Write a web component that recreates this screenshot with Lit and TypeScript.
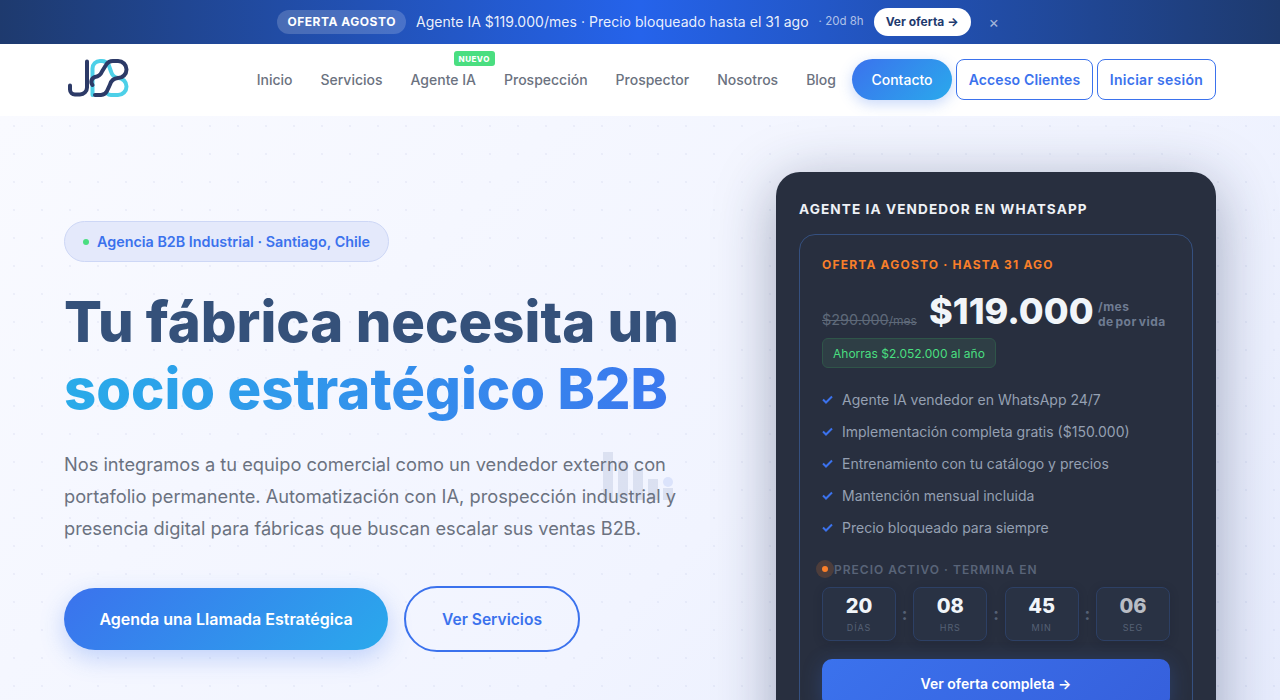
import { LitElement, html, css, svg } from "lit";
import { customElement } from "lit/decorators.js";

const checks = [
  "Agente IA vendedor en WhatsApp 24/7",
  "Implementación completa gratis ($150.000)",
  "Entrenamiento con tu catálogo y precios",
  "Mantención mensual incluida",
  "Precio bloqueado para siempre",
];
const nav = ["Inicio", "Servicios", "Agente IA", "Prospección", "Prospector", "Nosotros", "Blog"];
const counters = [["20", "DÍAS"], ["08", "HRS"], ["45", "MIN"], ["06", "SEG"]];

@customElement("app-root")
export class AppRoot extends LitElement {
  static styles = css`
    :host { display: block; height: 700px; overflow: hidden; font-family: Inter, "Liberation Sans", sans-serif; background: #f5f7ff; }
    * { box-sizing: border-box; }
    .banner { height: 44px; padding-right: 4px; display: flex; align-items: center; justify-content: center; background: linear-gradient(90deg, #1e3a6e 0%, #2563eb 50%, #1e3a6e 100%); color: #fff; }
    .tag { height: 24px; display: flex; align-items: center; padding: 0 10px 2px; border-radius: 12px; background: rgba(255,255,255,.18); font-size: 12px; font-weight: 700; letter-spacing: .53px; margin-right: 10px; }
    .msg { font-size: 14px; letter-spacing: .03px; color: rgba(255,255,255,.92); margin: 0 10px 2px 0; }
    .time { font-size: 11.5px; color: rgba(255,255,255,.65); margin: 0 10px 2px 0; }
    .go { height: 28px; display: flex; align-items: center; padding: 0 12px 2px; border-radius: 14px; background: #fff; color: #1e3a6e; font-size: 12px; font-weight: 700; margin-right: 18px; }
    .x { font-size: 16px; color: rgba(255,255,255,.6); width: 10px; line-height: 1; }
    .nav { height: 72px; padding: 0 64px 1px; background: #fff; display: flex; align-items: center; }
    .logo { width: 68px; height: 46px; display: block; flex: none; }
    .links { display: flex; margin-left: auto; align-items: center; gap: 28px; font-size: 14px; color: #6b7280; margin-right: 16px; }
    .link { position: relative; font-weight: 500; }
    .new { position: absolute; top: -20px; left: 43px; height: 15px; padding: 0 5px; border-radius: 3px; background: #4ade80; color: #fff; font-size: 8px; font-weight: 800; letter-spacing: .5px; display: flex; align-items: center; }
    .btns { display: flex; gap: 4px; align-items: center; }
    .contact { height: 41px; width: 100px; display: flex; align-items: center; justify-content: center; border-radius: 21px; background: linear-gradient(135deg, #3b72ed, #2aa9ec); color: #fff; font-size: 14px; font-weight: 500; box-shadow: 0 4px 14px rgba(59,114,237,.28); }
    .outline { height: 41px; width: 137px; display: flex; align-items: center; justify-content: center; border: 1px solid #3b72ed; border-radius: 8px; color: #3b72ed; font-size: 14px; letter-spacing: .14px; font-weight: 600; background: #fff; }
    .outline.narrow { width: 119px; letter-spacing: .28px; }
    .hero { position: relative; height: 584px; padding: 56px 64px 0; display: flex; justify-content: space-between; background-color: #f4f6fe; background-image: radial-gradient(circle, rgba(59,80,160,.06) 1.2px, transparent 1.4px), linear-gradient(135deg, #f9faff 0%, #f1f4ff 60%, #e7ecfd 100%); background-size: 28px 28px, 100% 100%; background-position: 0 -4px, 0 0; }
    .left { width: 640px; padding-top: 49px; position: relative; }
    .pill { display: inline-flex; align-items: center; height: 41px; padding: 0 18px; border-radius: 21px; background: #e4e9fb; border: 1px solid #cdd7f6; color: #3b72ed; font-size: 14.35px; font-weight: 600; vertical-align: top; }
    .dot { width: 6px; height: 6px; border-radius: 50%; background: #4ade80; margin-right: 8px; }
    h1 { margin: 27px 0 0; font-size: 56.2px; line-height: 67px; font-weight: 800; color: #35517a; white-space: nowrap; }
    .grad { display: block; width: 604px; background: linear-gradient(90deg, #29abe9 0%, #3b78ee 100%); -webkit-background-clip: text; background-clip: text; color: transparent; }
    p { margin: 25px 0 0; width: 620px; font-size: 18.24px; line-height: 32px; color: #6b7280; position: relative; }
    .cta { display: flex; gap: 16px; margin-top: 42px; align-items: center; }
    .primary { height: 62px; width: 324px; display: flex; align-items: center; justify-content: center; border-radius: 31px; background: linear-gradient(135deg, #3b72ed, #2aa9ec); color: #fff; font-size: 16px; font-weight: 600; box-shadow: 0 8px 24px rgba(59,114,237,.28); }
    .secondary { height: 66px; width: 176px; display: flex; align-items: center; justify-content: center; border-radius: 33px; border: 2px solid #3b72ed; color: #3b72ed; font-size: 15.6px; font-weight: 600; }
    .bars { position: absolute; left: 539px; top: 280px; height: 48px; display: flex; align-items: flex-end; gap: 5px; }
    .bars i { display: block; width: 10px; background: rgba(59,80,140,.12); }
    .blob { position: absolute; left: 599px; top: 305px; width: 10px; height: 10px; border-radius: 50%; background: #dbe3fb; }
    .card { width: 440px; height: 700px; flex: none; border-radius: 24px; background: #282f3f; padding: 27px 23px; box-shadow: 0 12px 60px rgba(30,41,80,.38); }
    .title { font-size: 13.6px; font-weight: 700; letter-spacing: 1.09px; color: #eef1f6; line-height: 20px; white-space: nowrap; }
    .inner { margin-top: 15px; border: 1px solid #35507f; border-radius: 16px; height: 600px; padding: 22px 22px; }
    .offer { font-size: 12px; font-weight: 700; letter-spacing: 1.2px; color: #f97f2a; line-height: 16px; }
    .prices { display: flex; align-items: center; margin-top: 12px; height: 50px; }
    .old { font-size: 14.4px; color: #5e6979; text-decoration: line-through; margin-top: 19px; width: 107px; white-space: nowrap; }
    .old small { font-size: 12px; }
    .big { font-size: 36px; font-weight: 800; color: #f1f5f9; line-height: 50px; width: 169px; margin-top: 2px; white-space: nowrap; }
    .per { font-size: 12px; font-weight: 700; color: #6f7c92; line-height: 15px; letter-spacing: .5px; word-spacing: -1.5px; margin-top: 7px; white-space: nowrap; }
    .save { display: flex; width: fit-content; align-items: center; height: 30px; padding: 0 10px; margin-top: 3px; border-radius: 6px; background: #2e3e45; border: 1px solid #2f5549; color: #4ade80; font-size: 12px; }
    ul { list-style: none; margin: 15px 0 0; padding: 0; }
    li { display: flex; align-items: center; height: 32px; font-size: 14px; color: #95a0b2; }
    li svg { width: 11px; height: 9px; margin-right: 9px; }
    .timer { display: flex; align-items: center; height: 18px; margin-top: 17px; margin-left: -6px; font-size: 12px; font-weight: 600; letter-spacing: 1px; color: #596478; }
    .pulse { width: 18px; height: 18px; border-radius: 50%; background: rgba(249,127,42,.18); display: flex; align-items: center; justify-content: center; }
    .pulse b { display: block; width: 6px; height: 6px; border-radius: 50%; background: #f97f2a; }
    .counts { display: flex; align-items: center; margin-top: 9px; justify-content: space-between; }
    .cbox { width: 74px; height: 54px; border: 1px solid #2d4065; border-radius: 8px; background: #293244; display: flex; flex-direction: column; align-items: center; padding-top: 4px; box-shadow: 0 2px 10px rgba(20,25,40,.2); }
    .num { font-size: 20px; font-weight: 800; line-height: 28px; color: #f1f5f9; }
    .num.fade { color: #b9bdc5; }
    .lab { font-size: 9px; letter-spacing: .9px; line-height: 14px; margin-top: 1px; color: #566175; }
    .sep { color: #566175; font-size: 17px; font-weight: 700; }
    .full { margin-top: 18px; height: 48px; border-radius: 10px; background: linear-gradient(135deg, #3b72ed, #3660dc); color: #fff; display: flex; align-items: center; justify-content: center; font-size: 14px; font-weight: 600; box-shadow: 0 4px 20px rgba(59,114,237,.25); }
  `;

  logo() {
    return html`<svg class="logo" viewBox="64 56.5 68 46" fill="none" stroke-linecap="round" stroke-linejoin="round">
      ${svg`<path d="M92.5 94.5V68a7.5 7.5 0 0 1 7.5-7.5h2a8 8 0 0 1 6.5 3.5L111 71a9 9 0 0 0 7 6.5a8.5 8.5 0 0 1 0 17h-7a7 7 0 0 1-4-1.5" stroke="#4dd0e8" stroke-width="4"/>
      <path d="M87 61V87a7 7 0 0 1-7 7H75a5 5 0 0 1-5-5V85" stroke="#2c3a67" stroke-width="4"/>
      <path d="M95 94.5H101a7 7 0 0 0 6-4L110 84a9 9 0 0 1 8-6.5a8.5 8.5 0 0 0 0-17h-5a8 8 0 0 0-7 4L102 71a9 9 0 0 1-7 5.5a5 5 0 0 0-2.5 8" stroke="#2c3a67" stroke-width="4"/>`}
    </svg>`;
  }

  render() {
    return html`
      <div class="banner">
        <span class="tag">OFERTA AGOSTO</span>
        <span class="msg">Agente IA $119.000/mes · Precio bloqueado hasta el 31 ago</span>
        <span class="time">· 20d 8h</span>
        <span class="go">Ver oferta →</span>
        <span class="x">×</span>
      </div>
      <div class="nav">
        ${this.logo()}
        <div class="links">
          ${nav.map((n) => html`<span class="link">${n}${n === "Agente IA" ? html`<span class="new">NUEVO</span>` : ""}</span>`)}
        </div>
        <div class="btns">
          <span class="contact">Contacto</span>
          <span class="outline">Acceso Clientes</span>
          <span class="outline narrow">Iniciar sesión</span>
        </div>
      </div>
      <div class="hero">
        <div class="left">
          <div class="pill"><span class="dot"></span>Agencia B2B Industrial · Santiago, Chile</div>
          <h1>Tu fábrica necesita un<span class="grad">socio estratégico B2B</span></h1>
          <div class="bars">
            ${[48, 39, 30, 21, 12].map((h) => html`<i style="height:${h}px"></i>`)}
          </div>
          <span class="blob"></span>
          <p>Nos integramos a tu equipo comercial como un vendedor externo con portafolio permanente. Automatización con IA, prospección industrial y presencia digital para fábricas que buscan escalar sus ventas B2B.</p>
          <div class="cta">
            <span class="primary">Agenda una Llamada Estratégica</span>
            <span class="secondary">Ver Servicios</span>
          </div>
        </div>
        <div class="card">
          <div class="title">AGENTE IA VENDEDOR EN WHATSAPP</div>
          <div class="inner">
            <div class="offer">OFERTA AGOSTO · HASTA 31 AGO</div>
            <div class="prices">
              <span class="old">$290.000<small>/mes</small></span>
              <span class="big">$119.000</span>
              <span class="per">/mes<br />de por vida</span>
            </div>
            <div class="save">Ahorras $2.052.000 al año</div>
            <ul>
              ${checks.map((c) => html`<li><svg viewBox="0 0 11 9" fill="none"><path d="M1 4.5 4 7.5 10 1.5" stroke="#3b72ed" stroke-width="2"/></svg>${c}</li>`)}
            </ul>
            <div class="timer"><span class="pulse"><b></b></span>PRECIO ACTIVO · TERMINA EN</div>
            <div class="counts">
              ${counters.map(([n, l], i) => html`${i ? html`<span class="sep">:</span>` : ""}<div class="cbox"><span class="num ${i === 3 ? "fade" : ""}">${n}</span><span class="lab">${l}</span></div>`)}
            </div>
            <div class="full">Ver oferta completa →</div>
          </div>
        </div>
      </div>
    `;
  }
}
